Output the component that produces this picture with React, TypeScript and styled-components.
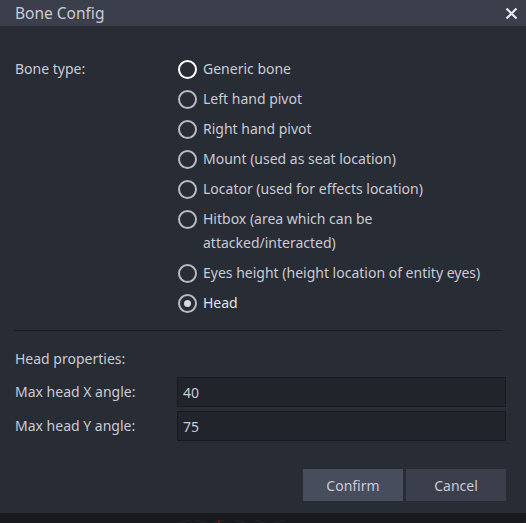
import React from "react";
import styled, { createGlobalStyle } from "styled-components";

const Global = createGlobalStyle`
  html, body { margin: 0; padding: 0; background: #17191d; }
  body { font-family: "Noto Sans", "Liberation Sans", sans-serif; }
  #root { width: 526px; height: 523px; overflow: hidden; }
`;

const Page = styled.div`
  width: 526px;
  height: 523px;
  display: flex;
  flex-direction: column;
  background: #17191d;
`;

const Dialog = styled.div`
  height: 513px;
  display: flex;
  flex-direction: column;
  background: #282c34;
  color: #cacad4;
  font-size: 14px;
`;

const TitleBar = styled.div`
  height: 26px;
  flex: none;
  display: flex;
  align-items: center;
  justify-content: space-between;
  padding: 0 8px 0 15px;
  background: #3a3f4b;
  color: #cacad4;
  font-size: 15.5px;
`;

const CloseButton = styled.button`
  all: unset;
  display: flex;
  align-items: center;
  justify-content: center;
  width: 14px;
  height: 14px;
  color: #e6e6ee;
`;

const Body = styled.div`
  flex: 1;
  display: flex;
  flex-direction: column;
  padding: 31px 20px 12px 15px;
`;

const FormRow = styled.div`
  display: grid;
  grid-template-columns: 162px 1fr;
  align-items: start;
`;

const Label = styled.div`
  line-height: 24px;
`;

const RadioList = styled.div`
  display: flex;
  flex-direction: column;
  gap: 6px;
`;

const RadioRow = styled.label`
  display: flex;
  align-items: flex-start;
  gap: 6px;
  line-height: 24px;
  padding-left: 1px;
`;

const RadioCircle = styled.span<{ $checked?: boolean; $focus?: boolean }>`
  flex: none;
  box-sizing: border-box;
  width: 19px;
  height: 19px;
  margin-top: 3px;
  border-radius: 50%;
  border: 2px solid ${(p) => (p.$focus ? "#ffffff" : "#b8b9c2")};
  display: flex;
  align-items: center;
  justify-content: center;
  &::after {
    content: "";
    display: ${(p) => (p.$checked ? "block" : "none")};
    width: 7px;
    height: 7px;
    border-radius: 50%;
    background: #d8d8e0;
  }
`;

const RadioText = styled.span<{ $bright?: boolean }>`
  color: ${(p) => (p.$bright ? "#e2e2ea" : "#cacad4")};
`;

const Separator = styled.hr`
  border: none;
  height: 1px;
  background: #1a1c21;
  margin: 15px 4px 16px -1px;
`;

const SectionTitle = styled.div`
  line-height: 24px;
  margin-bottom: 6px;
`;

const InputRow = styled.div`
  display: grid;
  grid-template-columns: 162px 1fr;
  align-items: center;
  margin-bottom: 4px;
`;

const TextInput = styled.div`
  box-sizing: border-box;
  height: 30px;
  display: flex;
  align-items: center;
  padding: 0 5px;
  background: #21252b;
  border: 1px solid #181a1f;
  color: #cacad4;
`;

const ButtonBar = styled.div`
  margin-top: auto;
  display: flex;
  justify-content: flex-end;
  gap: 3px;
`;

const Button = styled.button<{ $primary?: boolean }>`
  all: unset;
  box-sizing: border-box;
  width: 100px;
  height: 32px;
  display: flex;
  align-items: center;
  justify-content: center;
  font-family: "Noto Sans", "Liberation Sans", sans-serif;
  font-size: 14px;
  color: #cacad4;
  background: ${(p) => (p.$primary ? "#474d5d" : "#3a3f4b")};
`;

const Viewport = styled.div`
  flex: 1;
  background: #17191d;
  overflow: hidden;
`;

const options = [
  "Generic bone",
  "Left hand pivot",
  "Right hand pivot",
  "Mount (used as seat location)",
  "Locator (used for effects location)",
  "Hitbox (area which can be\nattacked/interacted)",
  "Eyes height (height location of entity eyes)",
  "Head",
];

export default function App() {
  return (
    <Page>
      <Global />
      <Dialog>
        <TitleBar>
          <span>Bone Config</span>
          <CloseButton aria-label="close">
            <svg width="13" height="13" viewBox="0 0 13 13">
              <path d="M1.5 1.5 L11.5 11.5 M11.5 1.5 L1.5 11.5" stroke="currentColor" strokeWidth="2.2" />
            </svg>
          </CloseButton>
        </TitleBar>
        <Body>
          <FormRow>
            <Label>Bone type:</Label>
            <RadioList>
              {options.map((o, i) => (
                <RadioRow key={o}>
                  <RadioCircle $focus={i === 0} $checked={i === options.length - 1} />
                  <RadioText $bright={i === options.length - 1}>
                    {o.split("\n").map((line, j) => (
                      <React.Fragment key={j}>
                        {j > 0 && <br />}
                        {line}
                      </React.Fragment>
                    ))}
                  </RadioText>
                </RadioRow>
              ))}
            </RadioList>
          </FormRow>
          <Separator />
          <SectionTitle>Head properties:</SectionTitle>
          <InputRow>
            <Label>Max head X angle:</Label>
            <TextInput>40</TextInput>
          </InputRow>
          <InputRow>
            <Label>Max head Y angle:</Label>
            <TextInput>75</TextInput>
          </InputRow>
          <ButtonBar>
            <Button $primary>Confirm</Button>
            <Button>Cancel</Button>
          </ButtonBar>
        </Body>
      </Dialog>
      <Viewport>
        <svg width="526" height="10" viewBox="0 0 526 10">
          <path
            d="M150 10 L190 0 M185 10 L225 0 M195 0 L235 10 M235 0 L270 10 M245 10 L285 0 M255 0 L285 10"
            stroke="#24272c"
            strokeWidth="1"
            fill="none"
          />
          <line x1="219" y1="0" x2="219" y2="10" stroke="#9a1212" strokeWidth="1.2" />
          <path d="M505 10 L526 2" stroke="#24272c" strokeWidth="1" />
        </svg>
      </Viewport>
    </Page>
  );
}
